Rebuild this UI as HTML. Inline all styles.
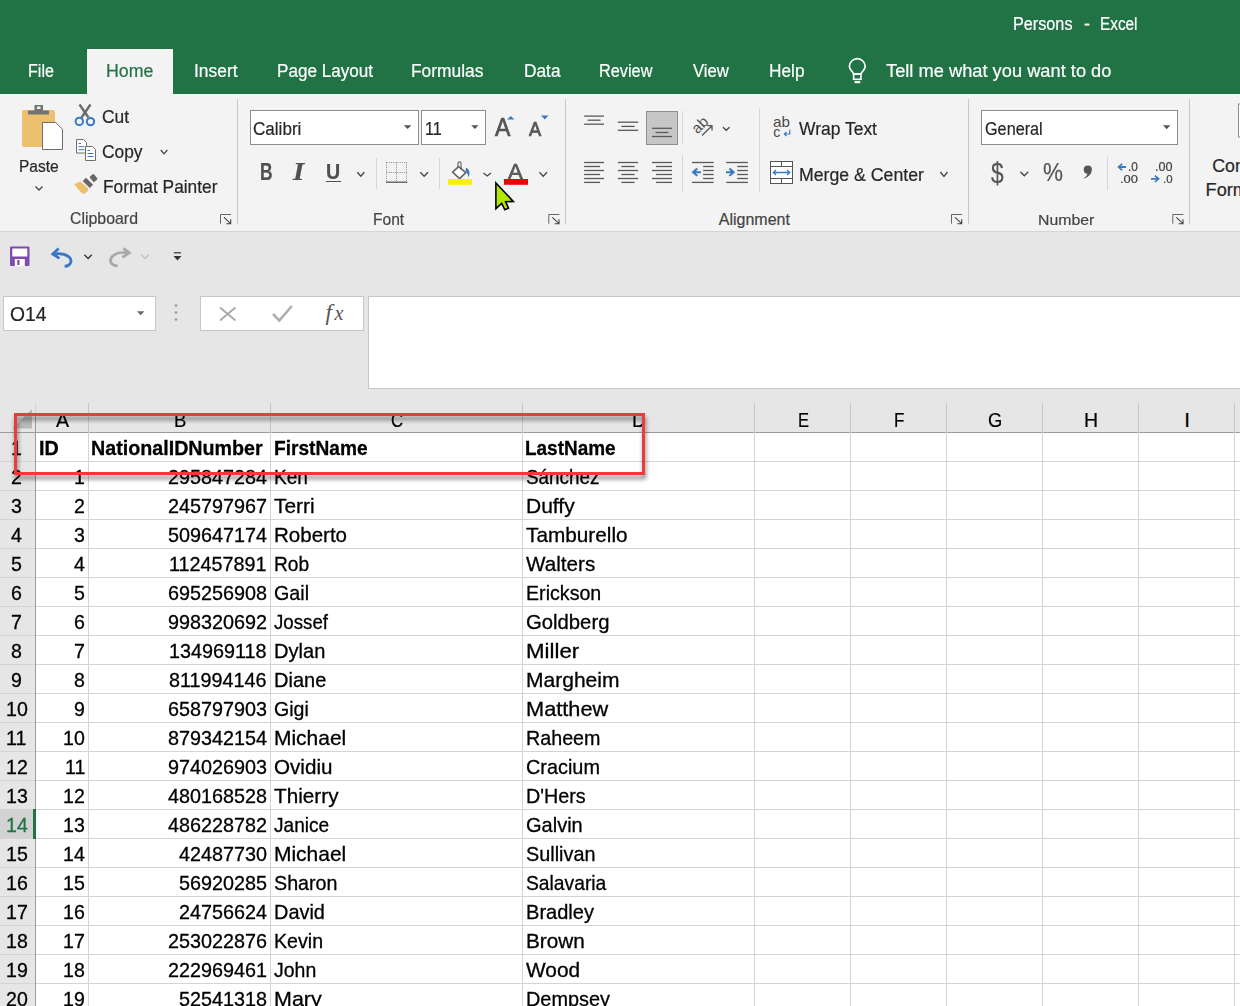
<!DOCTYPE html>
<html><head><meta charset="utf-8"><style>
*{margin:0;padding:0;box-sizing:border-box}
html,body{width:1240px;height:1006px;overflow:hidden;background:#e6e6e6;font-family:"Liberation Sans",sans-serif;position:relative}
.a{position:absolute;white-space:nowrap}
.t{transform-origin:0 0;-webkit-text-stroke:0.2px currentColor}
.g{-webkit-text-stroke:0.3px currentColor}
svg{position:absolute;left:0;top:0}
</style></head>
<body>
<div class="a" style="left:0;top:0;width:1240px;height:94px;background:#217346"></div>
<div class="a" style="left:87px;top:49px;width:86px;height:46px;background:#f3f3f3"></div>
<div class="a" style="left:0;top:94px;width:1240px;height:138px;background:#f3f3f3;border-bottom:1px solid #d5d5d5"></div>
<div class="a t" style="left:1012.50px;top:15.00px;font-size:18.90px;line-height:18.90px;color:#ffffff;transform:scaleX(0.8586);">Persons</div>
<div class="a t" style="left:1083.60px;top:15.00px;font-size:18.90px;line-height:18.90px;color:#ffffff;transform:scaleX(0.9550);">-</div>
<div class="a t" style="left:1100.00px;top:15.00px;font-size:18.90px;line-height:18.90px;color:#ffffff;transform:scaleX(0.8117);">Excel</div>
<div class="a t" style="left:27.50px;top:62.00px;font-size:18.90px;line-height:18.90px;color:#ffffff;transform:scaleX(0.8533);">File</div>
<div class="a t" style="left:106.40px;top:62.00px;font-size:18.90px;line-height:18.90px;color:#217346;transform:scaleX(0.9404);">Home</div>
<div class="a t" style="left:193.50px;top:62.00px;font-size:18.90px;line-height:18.90px;color:#ffffff;transform:scaleX(0.9209);">Insert</div>
<div class="a t" style="left:276.50px;top:62.00px;font-size:18.90px;line-height:18.90px;color:#ffffff;transform:scaleX(0.9048);">Page Layout</div>
<div class="a t" style="left:411.00px;top:62.00px;font-size:18.90px;line-height:18.90px;color:#ffffff;transform:scaleX(0.9207);">Formulas</div>
<div class="a t" style="left:523.50px;top:62.00px;font-size:18.90px;line-height:18.90px;color:#ffffff;transform:scaleX(0.9144);">Data</div>
<div class="a t" style="left:599.00px;top:62.00px;font-size:18.90px;line-height:18.90px;color:#ffffff;transform:scaleX(0.8626);">Review</div>
<div class="a t" style="left:692.50px;top:62.00px;font-size:18.90px;line-height:18.90px;color:#ffffff;transform:scaleX(0.8851);">View</div>
<div class="a t" style="left:768.50px;top:62.00px;font-size:18.90px;line-height:18.90px;color:#ffffff;transform:scaleX(0.9131);">Help</div>
<div class="a t" style="left:886.00px;top:62.00px;font-size:18.90px;line-height:18.90px;color:#ffffff;transform:scaleX(0.9671);">Tell me what you want to do</div>
<div class="a t" style="left:19.40px;top:158.00px;font-size:17.15px;line-height:17.15px;color:#262626;transform:scaleX(0.9073);">Paste</div>
<div class="a t" style="left:102.00px;top:109.00px;font-size:17.73px;line-height:17.73px;color:#262626;transform:scaleX(0.9792);">Cut</div>
<div class="a t" style="left:102.00px;top:144.00px;font-size:17.73px;line-height:17.73px;color:#262626;transform:scaleX(0.9781);">Copy</div>
<div class="a t" style="left:102.50px;top:179.00px;font-size:17.73px;line-height:17.73px;color:#262626;transform:scaleX(0.9765);">Format Painter</div>
<div class="a t" style="left:70.00px;top:211.00px;font-size:15.99px;line-height:15.99px;color:#444;transform:scaleX(0.9937);">Clipboard</div>
<div class="a" style="left:250px;top:110px;width:169px;height:35px;background:#fff;border:1px solid #8d8d8d"></div>
<div class="a" style="left:421px;top:110px;width:65px;height:35px;background:#fff;border:1px solid #8d8d8d"></div>
<div class="a t" style="left:253.40px;top:119.00px;font-size:19.19px;line-height:19.19px;color:#262626;transform:scaleX(0.8898);">Calibri</div>
<div class="a t" style="left:425.20px;top:119.00px;font-size:19.19px;line-height:19.19px;color:#262626;transform:scaleX(0.8440);">11</div>
<div class="a t" style="left:373.00px;top:212.00px;font-size:15.70px;line-height:15.70px;color:#444;transform:scaleX(0.9938);">Font</div>
<div class="a t" style="left:798.50px;top:120.00px;font-size:18.02px;line-height:18.02px;color:#262626;transform:scaleX(0.9693);">Wrap Text</div>
<div class="a t" style="left:799.00px;top:166.00px;font-size:18.02px;line-height:18.02px;color:#262626;transform:scaleX(0.9824);">Merge & Center</div>
<div class="a t" style="left:718.80px;top:212.00px;font-size:15.99px;line-height:15.99px;color:#444;">Alignment</div>
<div class="a" style="left:981px;top:110px;width:197px;height:35px;background:#fff;border:1px solid #8d8d8d"></div>
<div class="a t" style="left:984.50px;top:120.00px;font-size:18.90px;line-height:18.90px;color:#262626;transform:scaleX(0.8584);">General</div>
<div class="a t" style="left:1037.70px;top:212.00px;font-size:15.55px;line-height:15.55px;color:#444;transform:scaleX(1.0176);">Number</div>
<div class="a t" style="left:1212.30px;top:158.00px;font-size:17.73px;line-height:17.73px;color:#262626;">Con</div>
<div class="a t" style="left:1205.60px;top:181.00px;font-size:18.17px;line-height:18.17px;color:#262626;">Form</div>
<div class="a t" style="left:259.80px;top:161.00px;font-size:23.27px;line-height:23.27px;color:#505050;font-weight:bold;transform:scaleX(0.7494);">B</div>
<div class="a t" style="left:292.99px;top:160.00px;font-size:24.43px;line-height:24.43px;color:#505050;transform:scaleX(1.1779);font-style:italic;font-weight:bold;font-family:'Liberation Serif',serif;">I</div>
<div class="a t" style="left:326.30px;top:161.00px;font-size:22.22px;line-height:22.22px;color:#505050;font-weight:bold;transform:scaleX(0.8844);">U</div>
<div class="a" style="left:326px;top:181px;width:15px;height:1.3px;background:#505050"></div>
<div class="a t" style="left:494.60px;top:115.00px;font-size:24.87px;line-height:24.87px;color:#555;transform:scaleX(0.9276);-webkit-text-stroke:0.7px currentColor;">A</div>
<div class="a t" style="left:529.00px;top:120.00px;font-size:19.35px;line-height:19.35px;color:#555;transform:scaleX(0.9448);-webkit-text-stroke:0.7px currentColor;">A</div>
<div class="a t" style="left:507.90px;top:160.00px;font-size:22.69px;line-height:22.69px;color:#5a5a5a;transform:scaleX(0.9771);-webkit-text-stroke:0.7px currentColor;">A</div>
<div class="a t" style="left:991.20px;top:159.00px;font-size:28.68px;line-height:28.68px;color:#555;transform:scaleX(0.7917);">$</div>
<div class="a t" style="left:1042.60px;top:160.00px;font-size:25.29px;line-height:25.29px;color:#555;transform:scaleX(0.8887);">%</div>
<div class="a t" style="left:1128.30px;top:161.00px;font-size:12.01px;line-height:12.01px;color:#404040;transform:scaleX(0.9869);">.0</div>
<div class="a t" style="left:1120.30px;top:174.00px;font-size:11.45px;line-height:11.45px;color:#404040;transform:scaleX(1.1248);">.00</div>
<div class="a t" style="left:1154.50px;top:161.00px;font-size:12.01px;line-height:12.01px;color:#404040;transform:scaleX(1.0479);">.00</div>
<div class="a t" style="left:1162.50px;top:174.00px;font-size:11.45px;line-height:11.45px;color:#404040;transform:scaleX(0.9938);">.0</div>
<div class="a" style="left:3px;top:296px;width:153px;height:35px;background:#fff;border:1px solid #c6c6c6"></div>
<div class="a" style="left:200px;top:296px;width:164px;height:35px;background:#fff;border:1px solid #c6c6c6"></div>
<div class="a" style="left:368px;top:296px;width:880px;height:93px;background:#fff;border:1px solid #c6c6c6"></div>
<div class="a t" style="left:10.30px;top:305.00px;font-size:19.91px;line-height:19.91px;color:#262626;transform:scaleX(0.9698);">O14</div>
<div class="a" style="left:36px;top:433px;width:1204px;height:574px;background:#fff"></div>
<div class="a" style="left:0;top:432px;width:1240px;height:1px;background:#9b9b9b"></div>
<div class="a" style="left:0;top:461px;width:1240px;height:1px;background:#d4d4d4"></div>
<div class="a" style="left:0;top:490px;width:1240px;height:1px;background:#d4d4d4"></div>
<div class="a" style="left:0;top:519px;width:1240px;height:1px;background:#d4d4d4"></div>
<div class="a" style="left:0;top:548px;width:1240px;height:1px;background:#d4d4d4"></div>
<div class="a" style="left:0;top:577px;width:1240px;height:1px;background:#d4d4d4"></div>
<div class="a" style="left:0;top:606px;width:1240px;height:1px;background:#d4d4d4"></div>
<div class="a" style="left:0;top:635px;width:1240px;height:1px;background:#d4d4d4"></div>
<div class="a" style="left:0;top:664px;width:1240px;height:1px;background:#d4d4d4"></div>
<div class="a" style="left:0;top:693px;width:1240px;height:1px;background:#d4d4d4"></div>
<div class="a" style="left:0;top:722px;width:1240px;height:1px;background:#d4d4d4"></div>
<div class="a" style="left:0;top:751px;width:1240px;height:1px;background:#d4d4d4"></div>
<div class="a" style="left:0;top:780px;width:1240px;height:1px;background:#d4d4d4"></div>
<div class="a" style="left:0;top:809px;width:1240px;height:1px;background:#d4d4d4"></div>
<div class="a" style="left:0;top:838px;width:1240px;height:1px;background:#d4d4d4"></div>
<div class="a" style="left:0;top:867px;width:1240px;height:1px;background:#d4d4d4"></div>
<div class="a" style="left:0;top:896px;width:1240px;height:1px;background:#d4d4d4"></div>
<div class="a" style="left:0;top:925px;width:1240px;height:1px;background:#d4d4d4"></div>
<div class="a" style="left:0;top:954px;width:1240px;height:1px;background:#d4d4d4"></div>
<div class="a" style="left:0;top:983px;width:1240px;height:1px;background:#d4d4d4"></div>
<div class="a" style="left:35px;top:403px;width:1px;height:13px;background:#d2d2d2"></div>
<div class="a" style="left:35px;top:416px;width:1px;height:590px;background:#9b9b9b"></div>
<div class="a" style="left:88px;top:403px;width:1px;height:29px;background:#c6c6c6"></div>
<div class="a" style="left:88px;top:432px;width:1px;height:574px;background:#d4d4d4"></div>
<div class="a" style="left:270px;top:403px;width:1px;height:29px;background:#c6c6c6"></div>
<div class="a" style="left:270px;top:432px;width:1px;height:574px;background:#d4d4d4"></div>
<div class="a" style="left:522px;top:403px;width:1px;height:29px;background:#c6c6c6"></div>
<div class="a" style="left:522px;top:432px;width:1px;height:574px;background:#d4d4d4"></div>
<div class="a" style="left:754px;top:403px;width:1px;height:29px;background:#c6c6c6"></div>
<div class="a" style="left:754px;top:432px;width:1px;height:574px;background:#d4d4d4"></div>
<div class="a" style="left:850px;top:403px;width:1px;height:29px;background:#c6c6c6"></div>
<div class="a" style="left:850px;top:432px;width:1px;height:574px;background:#d4d4d4"></div>
<div class="a" style="left:946px;top:403px;width:1px;height:29px;background:#c6c6c6"></div>
<div class="a" style="left:946px;top:432px;width:1px;height:574px;background:#d4d4d4"></div>
<div class="a" style="left:1042px;top:403px;width:1px;height:29px;background:#c6c6c6"></div>
<div class="a" style="left:1042px;top:432px;width:1px;height:574px;background:#d4d4d4"></div>
<div class="a" style="left:1138px;top:403px;width:1px;height:29px;background:#c6c6c6"></div>
<div class="a" style="left:1138px;top:432px;width:1px;height:574px;background:#d4d4d4"></div>
<div class="a" style="left:1234px;top:403px;width:1px;height:29px;background:#c6c6c6"></div>
<div class="a" style="left:1234px;top:432px;width:1px;height:574px;background:#d4d4d4"></div>
<div class="a t" style="left:56.16px;top:410.00px;font-size:20.60px;line-height:20.60px;color:#000;transform:scaleX(0.9517);">A</div>
<div class="a t" style="left:174.03px;top:410.00px;font-size:20.60px;line-height:20.60px;color:#000;transform:scaleX(0.8981);">B</div>
<div class="a t" style="left:391.17px;top:410.00px;font-size:20.60px;line-height:20.60px;color:#000;transform:scaleX(0.8107);">C</div>
<div class="a t" style="left:632.23px;top:410.00px;font-size:20.60px;line-height:20.60px;color:#000;transform:scaleX(0.9363);">D</div>
<div class="a t" style="left:797.68px;top:410.00px;font-size:20.60px;line-height:20.60px;color:#000;transform:scaleX(0.8034);">E</div>
<div class="a t" style="left:893.99px;top:410.00px;font-size:20.60px;line-height:20.60px;color:#000;transform:scaleX(0.8295);">F</div>
<div class="a t" style="left:988.06px;top:410.00px;font-size:20.60px;line-height:20.60px;color:#000;transform:scaleX(0.8913);">G</div>
<div class="a t" style="left:1084.15px;top:410.00px;font-size:20.60px;line-height:20.60px;color:#000;transform:scaleX(0.9478);">H</div>
<div class="a t" style="left:1184.34px;top:410.00px;font-size:20.60px;line-height:20.60px;color:#000;">I</div>
<div class="a" style="left:0;top:810px;width:35px;height:28px;background:#d2d2d2"></div>
<div class="a" style="left:33px;top:809px;width:3px;height:30px;background:#217346"></div>
<div class="a t g" style="left:11.17px;top:438.00px;font-size:20.60px;line-height:20.60px;color:#000;transform:scaleX(0.9500)">1</div>
<div class="a t g" style="left:11.17px;top:467.00px;font-size:20.60px;line-height:20.60px;color:#000;transform:scaleX(0.9500)">2</div>
<div class="a t g" style="left:11.17px;top:496.00px;font-size:20.60px;line-height:20.60px;color:#000;transform:scaleX(0.9500)">3</div>
<div class="a t g" style="left:11.17px;top:525.00px;font-size:20.60px;line-height:20.60px;color:#000;transform:scaleX(0.9500)">4</div>
<div class="a t g" style="left:11.17px;top:554.00px;font-size:20.60px;line-height:20.60px;color:#000;transform:scaleX(0.9500)">5</div>
<div class="a t g" style="left:11.17px;top:583.00px;font-size:20.60px;line-height:20.60px;color:#000;transform:scaleX(0.9500)">6</div>
<div class="a t g" style="left:11.17px;top:612.00px;font-size:20.60px;line-height:20.60px;color:#000;transform:scaleX(0.9500)">7</div>
<div class="a t g" style="left:11.17px;top:641.00px;font-size:20.60px;line-height:20.60px;color:#000;transform:scaleX(0.9500)">8</div>
<div class="a t g" style="left:11.17px;top:670.00px;font-size:20.60px;line-height:20.60px;color:#000;transform:scaleX(0.9500)">9</div>
<div class="a t g" style="left:5.71px;top:699.00px;font-size:20.60px;line-height:20.60px;color:#000;transform:scaleX(0.9500)">10</div>
<div class="a t g" style="left:6.45px;top:728.00px;font-size:20.60px;line-height:20.60px;color:#000;transform:scaleX(0.9500)">11</div>
<div class="a t g" style="left:5.71px;top:757.00px;font-size:20.60px;line-height:20.60px;color:#000;transform:scaleX(0.9500)">12</div>
<div class="a t g" style="left:5.71px;top:786.00px;font-size:20.60px;line-height:20.60px;color:#000;transform:scaleX(0.9500)">13</div>
<div class="a t g" style="left:5.71px;top:815.00px;font-size:20.60px;line-height:20.60px;color:#217346;transform:scaleX(0.9500)">14</div>
<div class="a t g" style="left:5.71px;top:844.00px;font-size:20.60px;line-height:20.60px;color:#000;transform:scaleX(0.9500)">15</div>
<div class="a t g" style="left:5.71px;top:873.00px;font-size:20.60px;line-height:20.60px;color:#000;transform:scaleX(0.9500)">16</div>
<div class="a t g" style="left:5.71px;top:902.00px;font-size:20.60px;line-height:20.60px;color:#000;transform:scaleX(0.9500)">17</div>
<div class="a t g" style="left:5.71px;top:931.00px;font-size:20.60px;line-height:20.60px;color:#000;transform:scaleX(0.9500)">18</div>
<div class="a t g" style="left:5.71px;top:960.00px;font-size:20.60px;line-height:20.60px;color:#000;transform:scaleX(0.9500)">19</div>
<div class="a t g" style="left:5.71px;top:989.00px;font-size:20.60px;line-height:20.60px;color:#000;transform:scaleX(0.9500)">20</div>
<div class="a t g" style="left:38.60px;top:438.00px;font-size:20.60px;line-height:20.60px;color:#000;font-weight:bold;transform:scaleX(0.9585)">ID</div>
<div class="a t g" style="left:91.40px;top:438.00px;font-size:20.60px;line-height:20.60px;color:#000;font-weight:bold;transform:scaleX(0.9559)">NationalIDNumber</div>
<div class="a t g" style="left:273.60px;top:438.00px;font-size:20.60px;line-height:20.60px;color:#000;font-weight:bold;transform:scaleX(0.9287)">FirstName</div>
<div class="a t g" style="left:525.20px;top:438.00px;font-size:20.60px;line-height:20.60px;color:#000;font-weight:bold;transform:scaleX(0.9205)">LastName</div>
<div class="a t g" style="left:74.14px;top:467.00px;font-size:20.60px;line-height:20.60px;color:#000;transform:scaleX(0.9500)">1</div>
<div class="a t g" style="left:167.82px;top:467.00px;font-size:20.60px;line-height:20.60px;color:#000;transform:scaleX(0.9600)">295847284</div>
<div class="a t g" style="left:274.30px;top:467.00px;font-size:20.60px;line-height:20.60px;color:#000;transform:scaleX(0.9274)">Ken</div>
<div class="a t g" style="left:526.10px;top:467.00px;font-size:20.60px;line-height:20.60px;color:#000;transform:scaleX(0.9164)">Sánchez</div>
<div class="a t g" style="left:74.14px;top:496.00px;font-size:20.60px;line-height:20.60px;color:#000;transform:scaleX(0.9500)">2</div>
<div class="a t g" style="left:167.82px;top:496.00px;font-size:20.60px;line-height:20.60px;color:#000;transform:scaleX(0.9600)">245797967</div>
<div class="a t g" style="left:274.30px;top:496.00px;font-size:20.60px;line-height:20.60px;color:#000;transform:scaleX(1.0143)">Terri</div>
<div class="a t g" style="left:526.10px;top:496.00px;font-size:20.60px;line-height:20.60px;color:#000;transform:scaleX(1.0206)">Duffy</div>
<div class="a t g" style="left:74.14px;top:525.00px;font-size:20.60px;line-height:20.60px;color:#000;transform:scaleX(0.9500)">3</div>
<div class="a t g" style="left:167.82px;top:525.00px;font-size:20.60px;line-height:20.60px;color:#000;transform:scaleX(0.9600)">509647174</div>
<div class="a t g" style="left:274.30px;top:525.00px;font-size:20.60px;line-height:20.60px;color:#000;transform:scaleX(0.9966)">Roberto</div>
<div class="a t g" style="left:526.10px;top:525.00px;font-size:20.60px;line-height:20.60px;color:#000;transform:scaleX(1.0084)">Tamburello</div>
<div class="a t g" style="left:74.14px;top:554.00px;font-size:20.60px;line-height:20.60px;color:#000;transform:scaleX(0.9500)">4</div>
<div class="a t g" style="left:169.25px;top:554.00px;font-size:20.60px;line-height:20.60px;color:#000;transform:scaleX(0.9600)">112457891</div>
<div class="a t g" style="left:274.30px;top:554.00px;font-size:20.60px;line-height:20.60px;color:#000;transform:scaleX(0.9291)">Rob</div>
<div class="a t g" style="left:526.10px;top:554.00px;font-size:20.60px;line-height:20.60px;color:#000;transform:scaleX(1.0034)">Walters</div>
<div class="a t g" style="left:74.14px;top:583.00px;font-size:20.60px;line-height:20.60px;color:#000;transform:scaleX(0.9500)">5</div>
<div class="a t g" style="left:167.82px;top:583.00px;font-size:20.60px;line-height:20.60px;color:#000;transform:scaleX(0.9600)">695256908</div>
<div class="a t g" style="left:274.30px;top:583.00px;font-size:20.60px;line-height:20.60px;color:#000;transform:scaleX(0.9562)">Gail</div>
<div class="a t g" style="left:526.10px;top:583.00px;font-size:20.60px;line-height:20.60px;color:#000;transform:scaleX(0.9534)">Erickson</div>
<div class="a t g" style="left:74.14px;top:612.00px;font-size:20.60px;line-height:20.60px;color:#000;transform:scaleX(0.9500)">6</div>
<div class="a t g" style="left:167.82px;top:612.00px;font-size:20.60px;line-height:20.60px;color:#000;transform:scaleX(0.9600)">998320692</div>
<div class="a t g" style="left:274.30px;top:612.00px;font-size:20.60px;line-height:20.60px;color:#000;transform:scaleX(0.9066)">Jossef</div>
<div class="a t g" style="left:526.10px;top:612.00px;font-size:20.60px;line-height:20.60px;color:#000;transform:scaleX(0.9845)">Goldberg</div>
<div class="a t g" style="left:74.14px;top:641.00px;font-size:20.60px;line-height:20.60px;color:#000;transform:scaleX(0.9500)">7</div>
<div class="a t g" style="left:169.25px;top:641.00px;font-size:20.60px;line-height:20.60px;color:#000;transform:scaleX(0.9600)">134969118</div>
<div class="a t g" style="left:274.30px;top:641.00px;font-size:20.60px;line-height:20.60px;color:#000;transform:scaleX(0.9746)">Dylan</div>
<div class="a t g" style="left:526.10px;top:641.00px;font-size:20.60px;line-height:20.60px;color:#000;transform:scaleX(1.0825)">Miller</div>
<div class="a t g" style="left:74.14px;top:670.00px;font-size:20.60px;line-height:20.60px;color:#000;transform:scaleX(0.9500)">8</div>
<div class="a t g" style="left:169.25px;top:670.00px;font-size:20.60px;line-height:20.60px;color:#000;transform:scaleX(0.9600)">811994146</div>
<div class="a t g" style="left:274.30px;top:670.00px;font-size:20.60px;line-height:20.60px;color:#000;transform:scaleX(0.9727)">Diane</div>
<div class="a t g" style="left:526.10px;top:670.00px;font-size:20.60px;line-height:20.60px;color:#000;transform:scaleX(1.0204)">Margheim</div>
<div class="a t g" style="left:74.14px;top:699.00px;font-size:20.60px;line-height:20.60px;color:#000;transform:scaleX(0.9500)">9</div>
<div class="a t g" style="left:167.82px;top:699.00px;font-size:20.60px;line-height:20.60px;color:#000;transform:scaleX(0.9600)">658797903</div>
<div class="a t g" style="left:274.30px;top:699.00px;font-size:20.60px;line-height:20.60px;color:#000;transform:scaleX(0.9501)">Gigi</div>
<div class="a t g" style="left:526.10px;top:699.00px;font-size:20.60px;line-height:20.60px;color:#000;transform:scaleX(1.0568)">Matthew</div>
<div class="a t g" style="left:63.23px;top:728.00px;font-size:20.60px;line-height:20.60px;color:#000;transform:scaleX(0.9500)">10</div>
<div class="a t g" style="left:167.82px;top:728.00px;font-size:20.60px;line-height:20.60px;color:#000;transform:scaleX(0.9600)">879342154</div>
<div class="a t g" style="left:274.30px;top:728.00px;font-size:20.60px;line-height:20.60px;color:#000;transform:scaleX(1.0181)">Michael</div>
<div class="a t g" style="left:526.10px;top:728.00px;font-size:20.60px;line-height:20.60px;color:#000;transform:scaleX(0.9572)">Raheem</div>
<div class="a t g" style="left:64.70px;top:757.00px;font-size:20.60px;line-height:20.60px;color:#000;transform:scaleX(0.9500)">11</div>
<div class="a t g" style="left:167.82px;top:757.00px;font-size:20.60px;line-height:20.60px;color:#000;transform:scaleX(0.9600)">974026903</div>
<div class="a t g" style="left:274.30px;top:757.00px;font-size:20.60px;line-height:20.60px;color:#000;transform:scaleX(1.0014)">Ovidiu</div>
<div class="a t g" style="left:526.10px;top:757.00px;font-size:20.60px;line-height:20.60px;color:#000;transform:scaleX(0.9647)">Cracium</div>
<div class="a t g" style="left:63.23px;top:786.00px;font-size:20.60px;line-height:20.60px;color:#000;transform:scaleX(0.9500)">12</div>
<div class="a t g" style="left:167.82px;top:786.00px;font-size:20.60px;line-height:20.60px;color:#000;transform:scaleX(0.9600)">480168528</div>
<div class="a t g" style="left:274.30px;top:786.00px;font-size:20.60px;line-height:20.60px;color:#000;transform:scaleX(1.0069)">Thierry</div>
<div class="a t g" style="left:526.10px;top:786.00px;font-size:20.60px;line-height:20.60px;color:#000;transform:scaleX(0.9591)">D'Hers</div>
<div class="a t g" style="left:63.23px;top:815.00px;font-size:20.60px;line-height:20.60px;color:#000;transform:scaleX(0.9500)">13</div>
<div class="a t g" style="left:167.82px;top:815.00px;font-size:20.60px;line-height:20.60px;color:#000;transform:scaleX(0.9600)">486228782</div>
<div class="a t g" style="left:274.30px;top:815.00px;font-size:20.60px;line-height:20.60px;color:#000;transform:scaleX(0.9261)">Janice</div>
<div class="a t g" style="left:526.10px;top:815.00px;font-size:20.60px;line-height:20.60px;color:#000;transform:scaleX(0.9718)">Galvin</div>
<div class="a t g" style="left:63.23px;top:844.00px;font-size:20.60px;line-height:20.60px;color:#000;transform:scaleX(0.9500)">14</div>
<div class="a t g" style="left:178.80px;top:844.00px;font-size:20.60px;line-height:20.60px;color:#000;transform:scaleX(0.9600)">42487730</div>
<div class="a t g" style="left:274.30px;top:844.00px;font-size:20.60px;line-height:20.60px;color:#000;transform:scaleX(1.0181)">Michael</div>
<div class="a t g" style="left:526.10px;top:844.00px;font-size:20.60px;line-height:20.60px;color:#000;transform:scaleX(0.9628)">Sullivan</div>
<div class="a t g" style="left:63.23px;top:873.00px;font-size:20.60px;line-height:20.60px;color:#000;transform:scaleX(0.9500)">15</div>
<div class="a t g" style="left:178.80px;top:873.00px;font-size:20.60px;line-height:20.60px;color:#000;transform:scaleX(0.9600)">56920285</div>
<div class="a t g" style="left:274.30px;top:873.00px;font-size:20.60px;line-height:20.60px;color:#000;transform:scaleX(0.9566)">Sharon</div>
<div class="a t g" style="left:526.10px;top:873.00px;font-size:20.60px;line-height:20.60px;color:#000;transform:scaleX(0.9352)">Salavaria</div>
<div class="a t g" style="left:63.23px;top:902.00px;font-size:20.60px;line-height:20.60px;color:#000;transform:scaleX(0.9500)">16</div>
<div class="a t g" style="left:178.80px;top:902.00px;font-size:20.60px;line-height:20.60px;color:#000;transform:scaleX(0.9600)">24756624</div>
<div class="a t g" style="left:274.30px;top:902.00px;font-size:20.60px;line-height:20.60px;color:#000;transform:scaleX(0.9672)">David</div>
<div class="a t g" style="left:526.10px;top:902.00px;font-size:20.60px;line-height:20.60px;color:#000;transform:scaleX(0.9740)">Bradley</div>
<div class="a t g" style="left:63.23px;top:931.00px;font-size:20.60px;line-height:20.60px;color:#000;transform:scaleX(0.9500)">17</div>
<div class="a t g" style="left:167.82px;top:931.00px;font-size:20.60px;line-height:20.60px;color:#000;transform:scaleX(0.9600)">253022876</div>
<div class="a t g" style="left:274.30px;top:931.00px;font-size:20.60px;line-height:20.60px;color:#000;transform:scaleX(0.9517)">Kevin</div>
<div class="a t g" style="left:526.10px;top:931.00px;font-size:20.60px;line-height:20.60px;color:#000;transform:scaleX(1.0081)">Brown</div>
<div class="a t g" style="left:63.23px;top:960.00px;font-size:20.60px;line-height:20.60px;color:#000;transform:scaleX(0.9500)">18</div>
<div class="a t g" style="left:167.82px;top:960.00px;font-size:20.60px;line-height:20.60px;color:#000;transform:scaleX(0.9600)">222969461</div>
<div class="a t g" style="left:274.30px;top:960.00px;font-size:20.60px;line-height:20.60px;color:#000;transform:scaleX(0.9477)">John</div>
<div class="a t g" style="left:526.10px;top:960.00px;font-size:20.60px;line-height:20.60px;color:#000;transform:scaleX(1.0127)">Wood</div>
<div class="a t g" style="left:63.23px;top:989.00px;font-size:20.60px;line-height:20.60px;color:#000;transform:scaleX(0.9500)">19</div>
<div class="a t g" style="left:178.80px;top:989.00px;font-size:20.60px;line-height:20.60px;color:#000;transform:scaleX(0.9600)">52541318</div>
<div class="a t g" style="left:274.30px;top:989.00px;font-size:20.60px;line-height:20.60px;color:#000;transform:scaleX(1.0423)">Mary</div>
<div class="a t g" style="left:526.10px;top:989.00px;font-size:20.60px;line-height:20.60px;color:#000;transform:scaleX(0.9659)">Dempsey</div>
<svg width="1240" height="1006" viewBox="0 0 1240 1006"><line x1="237.5" y1="99" x2="237.5" y2="224" stroke="#c8c8c8" stroke-width="1"/>
<line x1="565.5" y1="99" x2="565.5" y2="224" stroke="#c8c8c8" stroke-width="1"/>
<line x1="968.5" y1="99" x2="968.5" y2="224" stroke="#c8c8c8" stroke-width="1"/>
<line x1="1189.5" y1="99" x2="1189.5" y2="224" stroke="#c8c8c8" stroke-width="1"/>
<line x1="376.5" y1="158" x2="376.5" y2="189" stroke="#d6d6d6" stroke-width="1"/>
<line x1="439.5" y1="158" x2="439.5" y2="189" stroke="#d6d6d6" stroke-width="1"/>
<line x1="682.5" y1="111" x2="682.5" y2="144" stroke="#d6d6d6" stroke-width="1"/>
<line x1="682.5" y1="155" x2="682.5" y2="192" stroke="#d6d6d6" stroke-width="1"/>
<line x1="759.5" y1="108" x2="759.5" y2="192" stroke="#d6d6d6" stroke-width="1"/>
<line x1="1107.5" y1="157" x2="1107.5" y2="190" stroke="#d6d6d6" stroke-width="1"/>
<rect x="22" y="110" width="33" height="37" rx="2" fill="#ebc06f"/>
<rect x="34.5" y="105" width="8.5" height="6" fill="#737373"/><rect x="37" y="106.5" width="3.5" height="2.5" fill="#f3f3f3"/>
<rect x="28" y="110.5" width="21" height="4" fill="#737373"/>
<path d="M42.5,122.5 H55.7 L62.5,129.3 V149.5 H42.5 Z" fill="#fff" stroke="#6e6e6e" stroke-width="1"/>
<polyline points="35.5,186.5 39.0,190 42.5,186.5" fill="none" stroke="#444444" stroke-width="1.3"/>
<line x1="79.5" y1="104.5" x2="88.5" y2="117.5" stroke="#6b6b6b" stroke-width="2.4"/>
<line x1="90.5" y1="104.5" x2="81.5" y2="117.5" stroke="#6b6b6b" stroke-width="2.4"/>
<circle cx="79.3" cy="121.4" r="3.7" fill="none" stroke="#3a78c4" stroke-width="2"/>
<circle cx="90.5" cy="121.6" r="3.7" fill="none" stroke="#3a78c4" stroke-width="2"/>
<path d="M76.5,139.5 H83.5 L86.5,142.5 V153 H76.5 Z" fill="#fff" stroke="#6e6e6e" stroke-width="1"/>
<path d="M78.5,143.5 H81 M78.5,146.7 H84.5 M78.5,149.7 H84.5" stroke="#3a78c4" stroke-width="1"/>
<path d="M85.5,146.5 H92.5 L95.5,149.5 V160.5 H85.5 Z" fill="#fff" stroke="#6e6e6e" stroke-width="1"/>
<path d="M87.5,150.5 H90 M87.5,153.5 H93.5 M87.5,156.5 H93.5" stroke="#3a78c4" stroke-width="1"/>
<polyline points="160.8,150 164.05,153.8 167.3,150" fill="none" stroke="#444444" stroke-width="1.3"/>
<rect x="-2.6" y="-3.5" width="5.2" height="7" rx="1.2" fill="#666" transform="translate(93.6,178) rotate(-40)"/>
<rect x="-2.3" y="-5" width="4.6" height="10" fill="#666" transform="translate(87.9,182.8) rotate(-45)"/>
<polygon points="74.2,184.3 80.1,181.6 87.9,187.9 87.9,191 83.7,194.2 80.1,191.5" fill="#ebbf6e"/>
<polygon points="403.8,125.3 411.4,125.3 407.6,129.1" fill="#555"/>
<polygon points="471.2,125.3 478.6,125.3 474.9,129.1" fill="#555"/>
<polygon points="507,119.6 514.5,119.6 510.75,116" fill="#3a78c4"/>
<polygon points="541,115.5 548.5,115.5 544.75,119.4" fill="#3a78c4"/>
<polyline points="357.3,172.3 360.85,176.3 364.4,172.3" fill="none" stroke="#444444" stroke-width="1.3"/>
<g fill="none" stroke="#8a8a8a" stroke-width="1" stroke-dasharray="1,1.2"><path d="M386.5,162.5 H407 M386.5,162.5 V182 M406.5,162.5 V182 M386.5,172.5 H407 M396.5,162.5 V182"/></g>
<line x1="386" y1="182.2" x2="407.3" y2="182.2" stroke="#555" stroke-width="1.3"/>
<polyline points="420.3,172.3 424.15,176.3 428,172.3" fill="none" stroke="#444444" stroke-width="1.3"/>
<path d="M452.6,172.2 L458.6,166.6 L465.8,172.6 L459.6,178.6 Z" fill="#fff" stroke="#666" stroke-width="1.6" stroke-linejoin="round"/>
<path d="M458,167.5 V162.8 Q459.5,160.8 461,162.8 V169" fill="none" stroke="#6a6a6a" stroke-width="1.2"/>
<circle cx="461" cy="168.6" r="1" fill="#555"/>
<path d="M466,167.6 Q471.5,170.5 468.6,177.4 Q467.8,173.5 465.6,171 Z" fill="#3a78c4"/>
<rect x="448" y="179" width="24" height="5.8" fill="#f7f200"/>
<polyline points="483.5,173.1 487.15,176 490.8,173.1" fill="none" stroke="#444444" stroke-width="1.3"/>
<rect x="503.9" y="179" width="24.1" height="5.8" fill="#f20000"/>
<polyline points="539.4,172.3 543.2,176.3 547,172.3" fill="none" stroke="#444444" stroke-width="1.3"/>
<path d="M495.9,182.9 L495.9,208.7 L501.7,203.3 L504.8,209.8 L508.5,208.1 L505.6,201.7 L513.3,201.4 Z" fill="#b2e800" stroke="#000" stroke-width="1.6" stroke-linejoin="miter"/>
<path d="M220.5,223.7 V214.5 H231.0" fill="none" stroke="#666" stroke-width="1"/>
<path d="M224.0,217.3 L230.7,223.7 M230.7,219.3 V223.7 H226.3" fill="none" stroke="#444" stroke-width="1.1"/>
<path d="M548.8,223.7 V214.5 H559.3" fill="none" stroke="#666" stroke-width="1"/>
<path d="M552.3,217.3 L559.0,223.7 M559.0,219.3 V223.7 H554.5999999999999" fill="none" stroke="#444" stroke-width="1.1"/>
<path d="M951.5,223.7 V214.5 H962.0" fill="none" stroke="#666" stroke-width="1"/>
<path d="M955.0,217.3 L961.7,223.7 M961.7,219.3 V223.7 H957.3" fill="none" stroke="#444" stroke-width="1.1"/>
<path d="M1172.8,223.7 V214.5 H1183.3" fill="none" stroke="#666" stroke-width="1"/>
<path d="M1176.3,217.3 L1183.0,223.7 M1183.0,219.3 V223.7 H1178.6" fill="none" stroke="#444" stroke-width="1.1"/>
<line x1="584.1" y1="116.1" x2="604" y2="116.1" stroke="#595959" stroke-width="1.3"/>
<line x1="587.6" y1="120.2" x2="600.6" y2="120.2" stroke="#595959" stroke-width="1.3"/>
<line x1="584.1" y1="124.2" x2="604" y2="124.2" stroke="#595959" stroke-width="1.3"/>
<line x1="617.8" y1="122.2" x2="638.2" y2="122.2" stroke="#595959" stroke-width="1.3"/>
<line x1="621.3" y1="126.4" x2="634.7" y2="126.4" stroke="#595959" stroke-width="1.3"/>
<line x1="617.8" y1="130.3" x2="638.2" y2="130.3" stroke="#595959" stroke-width="1.3"/>
<rect x="646.5" y="111.5" width="31" height="33" fill="#c6c6c6" stroke="#8f8f8f" stroke-width="1"/>
<line x1="652" y1="128.3" x2="672" y2="128.3" stroke="#595959" stroke-width="1.3"/>
<line x1="655.5" y1="132.5" x2="668.5" y2="132.5" stroke="#595959" stroke-width="1.3"/>
<line x1="652" y1="136.5" x2="672" y2="136.5" stroke="#595959" stroke-width="1.3"/>
<line x1="584.1" y1="162.5" x2="604" y2="162.5" stroke="#595959" stroke-width="1.3"/>
<line x1="584.1" y1="166.5" x2="600" y2="166.5" stroke="#595959" stroke-width="1.3"/>
<line x1="584.1" y1="170.5" x2="604" y2="170.5" stroke="#595959" stroke-width="1.3"/>
<line x1="584.1" y1="174.5" x2="600" y2="174.5" stroke="#595959" stroke-width="1.3"/>
<line x1="584.1" y1="178.5" x2="604" y2="178.5" stroke="#595959" stroke-width="1.3"/>
<line x1="584.1" y1="182.4" x2="600" y2="182.4" stroke="#595959" stroke-width="1.3"/>
<line x1="617.8" y1="162.5" x2="638.2" y2="162.5" stroke="#595959" stroke-width="1.3"/>
<line x1="621.3" y1="166.5" x2="634.7" y2="166.5" stroke="#595959" stroke-width="1.3"/>
<line x1="617.8" y1="170.5" x2="638.2" y2="170.5" stroke="#595959" stroke-width="1.3"/>
<line x1="621.3" y1="174.5" x2="634.7" y2="174.5" stroke="#595959" stroke-width="1.3"/>
<line x1="617.8" y1="178.5" x2="638.2" y2="178.5" stroke="#595959" stroke-width="1.3"/>
<line x1="621.3" y1="182.4" x2="634.7" y2="182.4" stroke="#595959" stroke-width="1.3"/>
<line x1="652" y1="162.5" x2="672" y2="162.5" stroke="#595959" stroke-width="1.3"/>
<line x1="656.1" y1="166.5" x2="672" y2="166.5" stroke="#595959" stroke-width="1.3"/>
<line x1="652" y1="170.5" x2="672" y2="170.5" stroke="#595959" stroke-width="1.3"/>
<line x1="656.1" y1="174.5" x2="672" y2="174.5" stroke="#595959" stroke-width="1.3"/>
<line x1="652" y1="178.5" x2="672" y2="178.5" stroke="#595959" stroke-width="1.3"/>
<line x1="656.1" y1="182.4" x2="672" y2="182.4" stroke="#595959" stroke-width="1.3"/>
<line x1="692" y1="162.5" x2="713.7" y2="162.5" stroke="#595959" stroke-width="1.3"/>
<line x1="726.2" y1="162.5" x2="747.9" y2="162.5" stroke="#595959" stroke-width="1.3"/>
<line x1="703.1" y1="166.5" x2="713.7" y2="166.5" stroke="#595959" stroke-width="1.3"/>
<line x1="737.2" y1="166.5" x2="747.9" y2="166.5" stroke="#595959" stroke-width="1.3"/>
<line x1="703.1" y1="170.5" x2="713.7" y2="170.5" stroke="#595959" stroke-width="1.3"/>
<line x1="737.2" y1="170.5" x2="747.9" y2="170.5" stroke="#595959" stroke-width="1.3"/>
<line x1="703.1" y1="174.5" x2="713.7" y2="174.5" stroke="#595959" stroke-width="1.3"/>
<line x1="737.2" y1="174.5" x2="747.9" y2="174.5" stroke="#595959" stroke-width="1.3"/>
<line x1="703.1" y1="178.5" x2="713.7" y2="178.5" stroke="#595959" stroke-width="1.3"/>
<line x1="737.2" y1="178.5" x2="747.9" y2="178.5" stroke="#595959" stroke-width="1.3"/>
<line x1="692" y1="182.4" x2="713.7" y2="182.4" stroke="#595959" stroke-width="1.3"/>
<line x1="726.2" y1="182.4" x2="747.9" y2="182.4" stroke="#595959" stroke-width="1.3"/>
<path d="M691.5,172.2 L696.5,167.8 L698,169.2 L695.8,171.2 H701 V173.2 H695.8 L698,175.2 L696.5,176.6 Z" fill="#3a78c4"/>
<path d="M735.2,172.2 L730.2,167.8 L728.7,169.2 L730.9,171.2 H726 V173.2 H730.9 L728.7,175.2 L730.2,176.6 Z" fill="#3a78c4"/>
<text x="0" y="0" font-family="Liberation Sans" font-size="15" fill="#505050" transform="translate(697.6,134.4) rotate(-45)">ab</text>
<path d="M702,135.5 L712,125.7 M707.3,125.7 H712 V130.4" fill="none" stroke="#555" stroke-width="1.3"/>
<polyline points="723,127.3 726.25,130.3 729.5,127.3" fill="none" stroke="#444444" stroke-width="1.3"/>
<text x="773" y="126.6" font-family="Liberation Sans" font-size="14.3" fill="#4a4a4a" textLength="17" lengthAdjust="spacingAndGlyphs">ab</text>
<text x="773.3" y="136.8" font-family="Liberation Sans" font-size="14.3" fill="#4a4a4a">c</text>
<path d="M789.8,129.8 V134 H784.5 M786.6,131.9 L784.3,134 L786.6,136.1" fill="none" stroke="#3a78c4" stroke-width="1.2"/>
<rect x="770.5" y="161.5" width="22" height="22" fill="#fff" stroke="#555" stroke-width="1"/>
<path d="M770.5,166.5 H792.5 M770.5,178.5 H792.5 M781.5,161.5 V166.5 M781.5,178.5 V183.5" stroke="#555" stroke-width="1"/>
<path d="M773.5,172.5 H789.5 M776,170 L773.3,172.5 L776,175 M787,170 L789.7,172.5 L787,175" fill="none" stroke="#3a78c4" stroke-width="1.3"/>
<polyline points="940.4,172 943.95,176.5 947.5,172" fill="none" stroke="#444444" stroke-width="1.3"/>
<polygon points="1163,125.3 1170.4,125.3 1166.7,129.2" fill="#555"/>
<polyline points="1020.4,171.8 1024.3,175.8 1028.2,171.8" fill="none" stroke="#444444" stroke-width="1.3"/>
<path d="M1091.9,169.6 A4.1,4.1 0 1 0 1087.6,173.7 Q1086.8,176.6 1083.2,178.7 Q1091.6,176.4 1091.9,169.6 Z" fill="#555"/>
<path d="M1117.3,167 L1121.5,163.2 L1122.8,164.4 L1120.6,166.1 H1126 V167.9 H1120.6 L1122.8,169.6 L1121.5,170.8 Z" fill="#3a78c4"/>
<path d="M1159.8,178.8 L1155.6,175 L1154.3,176.2 L1156.5,177.9 H1151 V179.7 H1156.5 L1154.3,181.4 L1155.6,182.6 Z" fill="#3a78c4"/>
<polygon points="32,409 32,428.5 12.5,428.5" fill="#b8b8b8"/>
<rect x="10" y="246.5" width="19.5" height="19.5" rx="1" fill="#7f4bab"/>
<rect x="12.3" y="248.5" width="15" height="8" fill="#fff"/>
<rect x="14.8" y="259" width="10" height="7" fill="#fff"/><rect x="17.3" y="260" width="2.2" height="5" fill="#7f4bab"/>
<path d="M54,254 C60,253.2 65,254 68.6,256.6 C73,260.2 71,265.8 64.6,266.4" fill="none" stroke="#3a78c4" stroke-width="2.8"/>
<polyline points="58.6,248.6 52.8,254 59.4,258.4" fill="none" stroke="#3a78c4" stroke-width="2.8" stroke-linejoin="miter"/>
<polyline points="84.4,254.8 88.1,258.4 91.8,254.8" fill="none" stroke="#333" stroke-width="1.4"/>
<path d="M128.4,252.8 C122,252 114,253 111.2,258 C109.2,262 112,265.6 117.6,266" fill="none" stroke="#a8a8a8" stroke-width="2.8"/>
<polyline points="123.4,248.4 129.2,252.8 122.4,257.4" fill="none" stroke="#a8a8a8" stroke-width="2.8"/>
<polyline points="141.5,254.8 145.15,258.4 148.8,254.8" fill="none" stroke="#bdbdbd" stroke-width="1.2"/>
<line x1="173.8" y1="252.8" x2="181" y2="252.8" stroke="#333" stroke-width="1.2"/>
<polygon points="173.5,256 181.5,256 177.5,260.5" fill="#333"/>
<polygon points="137,311.3 144.4,311.3 140.7,315.2" fill="#666"/>
<circle cx="176" cy="305.5" r="1.3" fill="#9a9a9a"/>
<circle cx="176" cy="312.5" r="1.3" fill="#9a9a9a"/>
<circle cx="176" cy="319.5" r="1.3" fill="#9a9a9a"/>
<path d="M220,307.5 L235.5,320.5 M235.5,307.5 L220,320.5" stroke="#a8a8a8" stroke-width="1.8"/>
<polyline points="273,314 279.3,320.5 291.8,306" fill="none" stroke="#b0b0b0" stroke-width="2.6"/>
<text x="325.5" y="319.5" font-family="Liberation Serif" font-style="italic" font-size="23" fill="#555">f</text>
<text x="334.6" y="319.5" font-family="Liberation Serif" font-style="italic" font-size="20" fill="#555">x</text>
<path d="M853.6,74 C853.2,71.8 849.4,70 849.4,66.6 A7.9,7.9 0 1 1 865.2,66.6 C865.2,70 861.4,71.8 861,74 Z" fill="none" stroke="#fff" stroke-width="1.7"/>
<rect x="853.6" y="74" width="7.4" height="5.3" fill="none" stroke="#fff" stroke-width="1.6"/>
<rect x="854.6" y="81" width="5.6" height="2.2" fill="#fff"/>
<rect x="1238.5" y="104" width="6" height="33" fill="#fff" stroke="#8d8d8d" stroke-width="1"/></svg>
<div class="a" style="left:14px;top:413px;width:631px;height:62px;border:3px solid #f03a3a;filter:drop-shadow(1px 4px 2px rgba(0,0,0,.5))"></div>
</body></html>
